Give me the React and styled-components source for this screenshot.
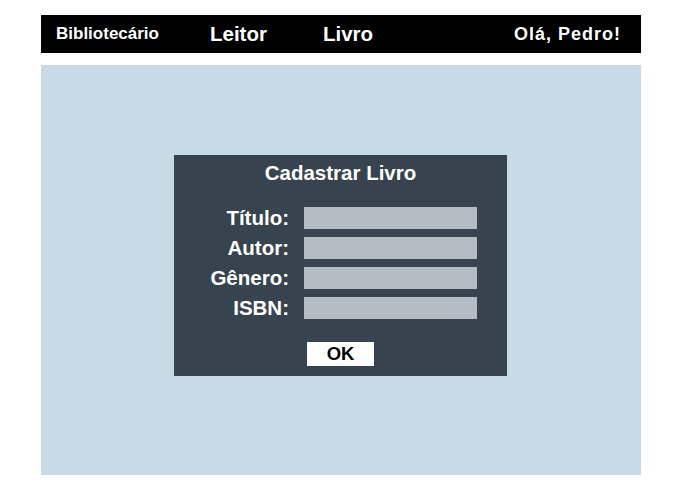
import React from "react";
import styled, { createGlobalStyle } from "styled-components";

const Global = createGlobalStyle`
  html, body { margin: 0; padding: 0; background: #ffffff; }
  body { font-family: "Liberation Sans", Arial, sans-serif; }
`;

const Page = styled.div`
  width: 600px;
  padding: 15px 0 0 41px;
`;

const Header = styled.header`
  display: flex;
  align-items: center;
  height: 38px;
  background: #000000;
  color: #ffffff;
  font-weight: bold;
`;

const NavItem = styled.span`
  margin-left: ${(p) => p.$offset}px;
  font-size: ${(p) => p.$size}px;
  white-space: nowrap;
`;

const Greeting = styled.span`
  margin-left: auto;
  margin-right: 20px;
  font-size: 18px;
  letter-spacing: 1px;
  white-space: nowrap;
`;

const Panel = styled.main`
  margin-top: 12px;
  height: 410px;
  box-sizing: border-box;
  padding: 90px 0 0 133px;
  background: #c8dae6;
  display: flex;
  align-items: flex-start;
`;

const Dialog = styled.form`
  width: 333px;
  box-sizing: border-box;
  padding: 6px 0 10px;
  background: #37444f;
  color: #ffffff;
  display: flex;
  flex-direction: column;
  align-items: center;
`;

const Title = styled.h2`
  margin: 0;
  font-size: 20.5px;
  line-height: 24px;
  font-weight: bold;
`;

const Fields = styled.div`
  margin-top: 22px;
  align-self: flex-start;
  display: grid;
  grid-template-columns: 115px 173px;
  column-gap: 15px;
  row-gap: 8px;
`;

const Label = styled.label`
  text-align: right;
  font-size: 20.5px;
  font-weight: bold;
  line-height: 22px;
`;

const Input = styled.input`
  display: block;
  width: 173px;
  height: 22px;
  box-sizing: border-box;
  margin: 0;
  border: none;
  padding: 0 4px;
  background: #b4bcc4;
  font-family: inherit;
  font-size: 14px;
  outline: none;
`;

const OkButton = styled.button`
  margin-top: 23px;
  width: 67px;
  height: 24px;
  border: none;
  padding: 0;
  background: #ffffff;
  color: #000000;
  font-family: inherit;
  font-size: 18.5px;
  font-weight: bold;
  line-height: 24px;
  cursor: pointer;
`;

const fields = [
  { id: "titulo", label: "Título:" },
  { id: "autor", label: "Autor:" },
  { id: "genero", label: "Gênero:" },
  { id: "isbn", label: "ISBN:" },
];

export default function App() {
  return (
    <>
      <Global />
      <Page>
        <Header>
          <NavItem $offset={15} $size={17}>Bibliotecário</NavItem>
          <NavItem $offset={51} $size={20.5}>Leitor</NavItem>
          <NavItem $offset={56} $size={20.5}>Livro</NavItem>
          <Greeting>Olá, Pedro!</Greeting>
        </Header>
        <Panel>
          <Dialog onSubmit={(e) => e.preventDefault()}>
            <Title>Cadastrar Livro</Title>
            <Fields>
              {fields.map((f) => (
                <React.Fragment key={f.id}>
                  <Label htmlFor={f.id}>{f.label}</Label>
                  <Input id={f.id} type="text" />
                </React.Fragment>
              ))}
            </Fields>
            <OkButton type="submit">OK</OkButton>
          </Dialog>
        </Panel>
      </Page>
    </>
  );
}
